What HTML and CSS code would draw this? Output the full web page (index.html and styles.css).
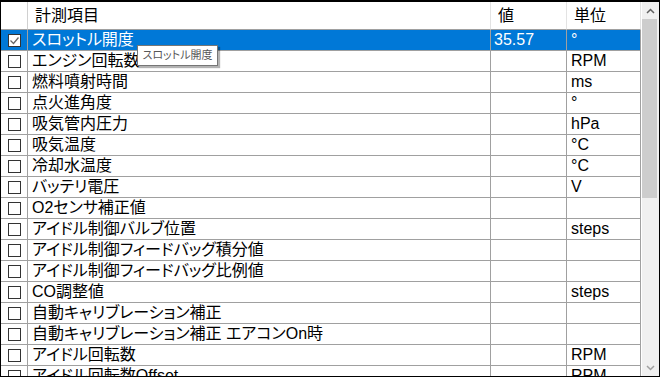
FILE: index.html
```html
<!DOCTYPE html>
<html lang="ja">
<head>
    <meta charset="UTF-8">
    <title>計測項目</title>
    <link rel="stylesheet" href="styles.css">
</head>
<body>
    <div class="frame">
        <div class="grid">
            <div class="row head">
                <div class="cell check"></div>
                <div class="cell">計測項目</div>
                <div class="cell">値</div>
                <div class="cell">単位</div>
            </div>
            <div class="row selected">
                <div class="cell check"><span class="box checked"><svg width="11" height="11" viewBox="0 0 11 11"><polyline points="1.5,5.5 4.5,8.5 9.5,2.5" fill="none" stroke="#666" stroke-width="1.3"/></svg></span></div>
                <div class="cell">スロットル開度</div>
                <div class="cell num">35.57</div>
                <div class="cell">°</div>
            </div>
            <div class="row">
                <div class="cell check"><span class="box"></span></div>
                <div class="cell">エンジン回転数</div>
                <div class="cell"></div>
                <div class="cell">RPM</div>
            </div>
            <div class="row">
                <div class="cell check"><span class="box"></span></div>
                <div class="cell">燃料噴射時間</div>
                <div class="cell"></div>
                <div class="cell">ms</div>
            </div>
            <div class="row">
                <div class="cell check"><span class="box"></span></div>
                <div class="cell">点火進角度</div>
                <div class="cell"></div>
                <div class="cell">°</div>
            </div>
            <div class="row">
                <div class="cell check"><span class="box"></span></div>
                <div class="cell">吸気管内圧力</div>
                <div class="cell"></div>
                <div class="cell">hPa</div>
            </div>
            <div class="row">
                <div class="cell check"><span class="box"></span></div>
                <div class="cell">吸気温度</div>
                <div class="cell"></div>
                <div class="cell">°C</div>
            </div>
            <div class="row">
                <div class="cell check"><span class="box"></span></div>
                <div class="cell">冷却水温度</div>
                <div class="cell"></div>
                <div class="cell">°C</div>
            </div>
            <div class="row">
                <div class="cell check"><span class="box"></span></div>
                <div class="cell">バッテリ電圧</div>
                <div class="cell"></div>
                <div class="cell">V</div>
            </div>
            <div class="row">
                <div class="cell check"><span class="box"></span></div>
                <div class="cell">O2センサ補正値</div>
                <div class="cell"></div>
                <div class="cell"></div>
            </div>
            <div class="row">
                <div class="cell check"><span class="box"></span></div>
                <div class="cell">アイドル制御バルブ位置</div>
                <div class="cell"></div>
                <div class="cell">steps</div>
            </div>
            <div class="row">
                <div class="cell check"><span class="box"></span></div>
                <div class="cell">アイドル制御フィードバッグ積分値</div>
                <div class="cell"></div>
                <div class="cell"></div>
            </div>
            <div class="row">
                <div class="cell check"><span class="box"></span></div>
                <div class="cell">アイドル制御フィードバッグ比例値</div>
                <div class="cell"></div>
                <div class="cell"></div>
            </div>
            <div class="row">
                <div class="cell check"><span class="box"></span></div>
                <div class="cell">CO調整値</div>
                <div class="cell"></div>
                <div class="cell">steps</div>
            </div>
            <div class="row">
                <div class="cell check"><span class="box"></span></div>
                <div class="cell">自動キャリブレーション補正</div>
                <div class="cell"></div>
                <div class="cell"></div>
            </div>
            <div class="row">
                <div class="cell check"><span class="box"></span></div>
                <div class="cell">自動キャリブレーション補正 エアコンOn時</div>
                <div class="cell"></div>
                <div class="cell"></div>
            </div>
            <div class="row">
                <div class="cell check"><span class="box"></span></div>
                <div class="cell">アイドル回転数</div>
                <div class="cell"></div>
                <div class="cell">RPM</div>
            </div>
            <div class="row">
                <div class="cell check"><span class="box"></span></div>
                <div class="cell">アイドル回転数Offset</div>
                <div class="cell"></div>
                <div class="cell">RPM</div>
            </div>
        </div>

        <div class="scrollbar">
            <div class="arrow"><svg width="9" height="6" viewBox="0 0 9 6"><polyline points="1,5 4.5,1.5 8,5" fill="none" stroke="#606060" stroke-width="1.5"/></svg></div>
            <div class="thumb"></div>
            <div class="track"></div>
            <div class="arrow"><svg width="9" height="6" viewBox="0 0 9 6"><polyline points="1,1 4.5,4.5 8,1" fill="none" stroke="#a0a0a0" stroke-width="1.5"/></svg></div>
        </div>

        <div class="tooltip">スロットル開度</div>
    </div>
</body>
</html>
```

FILE: styles.css
```css
body {
    margin: 0;
    font-family: "Liberation Sans", "Noto Sans CJK JP", sans-serif;
    background-color: #fff;
    color: #000;
}
.frame {
    position: relative;
    width: 660px;
    height: 377px;
    box-sizing: border-box;
    border: 1px solid #000;
    border-top-width: 2px;
    display: flex;
    overflow: hidden;
}
.grid {
    width: 640px;
    overflow: hidden;
}
.row {
    display: grid;
    grid-template-columns: 27px 463px 76px 74px;
    height: 21px;
}
.cell {
    box-sizing: border-box;
    border-right: 1px solid #a0a0a0;
    border-bottom: 1px solid #a0a0a0;
    padding-left: 4px;
    font-size: 16px;
    line-height: 20px;
    font-feature-settings: "palt";
    white-space: nowrap;
    overflow: hidden;
}
.head {
    height: 28px;
}
.head .cell {
    line-height: 27px;
    padding-left: 7px;
    border-right-color: #e3e3e3;
}
.head .cell:first-child {
    border-right-color: #d0d0d0;
}
.check {
    padding-left: 0;
    display: flex;
    align-items: center;
}
.box {
    width: 13px;
    height: 13px;
    box-sizing: border-box;
    margin-left: 7px;
    border: 1px solid #333;
    background-color: #fff;
    display: flex;
    align-items: center;
    justify-content: center;
}
.selected .cell {
    background-color: #0078d7;
    color: #fff;
}
.selected .check {
    background-color: #0078d7;
}
.num {
    padding-left: 3px;
}
.scrollbar {
    width: 18px;
    background-color: #f0f0f0;
    display: flex;
    flex-direction: column;
    border-left: 1px solid #fff;
    box-sizing: border-box;
}
.arrow {
    height: 17px;
    display: flex;
    align-items: center;
    justify-content: center;
}
.thumb {
    height: 179px;
    width: 15px;
    background-color: #cdcdcd;
}
.track {
    flex: 1;
}
.tooltip {
    position: absolute;
    left: 136px;
    top: 43px;
    width: 81px;
    height: 21px;
    box-sizing: border-box;
    border: 1px solid #767676;
    background-color: #fff;
    box-shadow: 2px 2px 1px rgba(0, 0, 0, 0.3);
    color: #575757;
    font-size: 11px;
    line-height: 19px;
    text-align: center;
    font-feature-settings: "palt";
}
```
